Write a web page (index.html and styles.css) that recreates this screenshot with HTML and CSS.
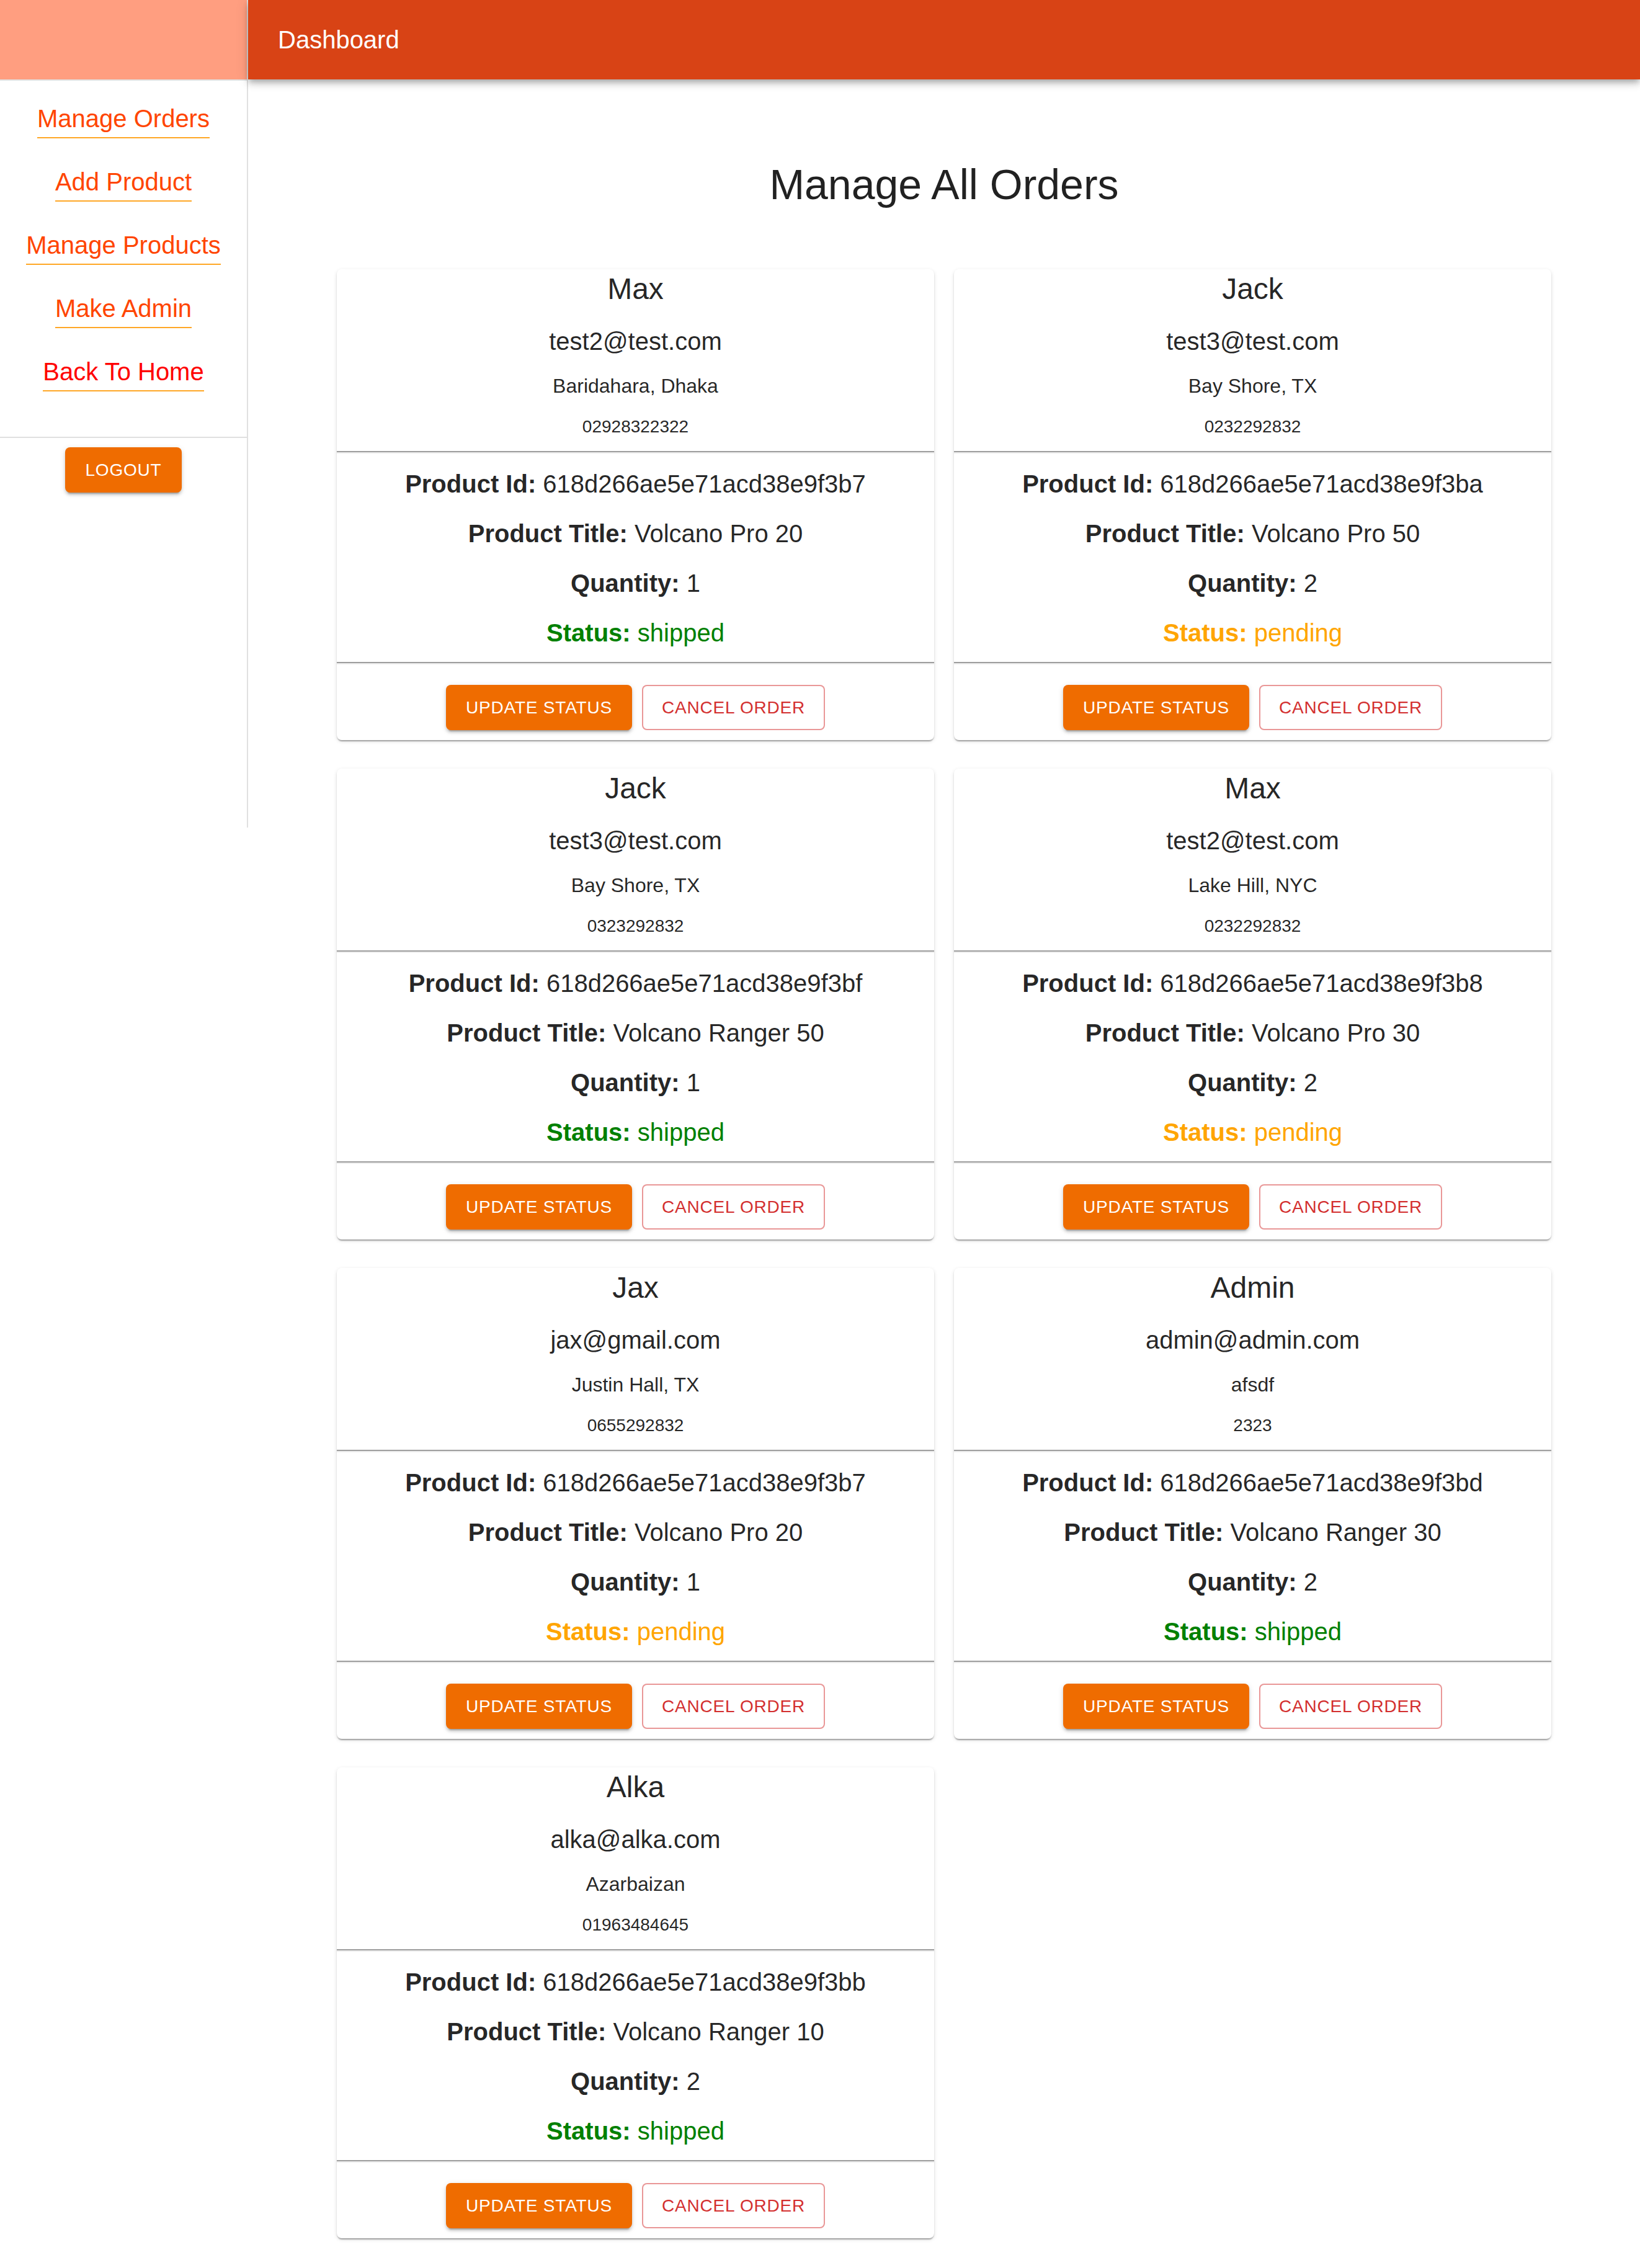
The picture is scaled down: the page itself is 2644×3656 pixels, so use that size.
FILE: index.html
```html
<!DOCTYPE html>
<html lang="en">
<head>
<meta charset="utf-8">
<title>Dashboard - Manage All Orders</title>
<link rel="stylesheet" href="styles.css">
</head>
<body>
<div class="app">
  <aside class="drawer">
    <div class="drawer-head"></div>
    <hr class="divider">
    <nav class="nav">
      <a class="nav-link" href="#">Manage Orders</a>
      <a class="nav-link" href="#">Add Product</a>
      <a class="nav-link" href="#">Manage Products</a>
      <a class="nav-link" href="#">Make Admin</a>
      <a class="nav-link nav-link-home" href="#">Back To Home</a>
    </nav>
    <hr class="divider divider-foot">
    <div class="drawer-foot">
      <button class="btn btn-contained">Logout</button>
    </div>
  </aside>

  <div class="main">
    <header class="appbar">
      <h6 class="appbar-title">Dashboard</h6>
    </header>

    <main class="content">
      <h4 class="page-title">Manage All Orders</h4>

      <div class="orders">
        <div class="card">
          <h5 class="customer-name">Max</h5>
          <p class="customer-email">test2@test.com</p>
          <p class="customer-address">Baridahara, Dhaka</p>
          <p class="customer-phone">02928322322</p>
          <hr class="card-rule">
          <div class="order-details">
            <p class="detail"><b>Product Id:</b> 618d266ae5e71acd38e9f3b7</p>
            <p class="detail"><b>Product Title:</b> Volcano Pro 20</p>
            <p class="detail"><b>Quantity:</b> 1</p>
            <p class="detail status-shipped"><b>Status:</b> shipped</p>
          </div>
          <hr class="card-rule card-rule-bottom">
          <div class="card-actions">
            <button class="btn btn-contained">Update Status</button>
            <button class="btn btn-outlined">Cancel Order</button>
          </div>
        </div>

        <div class="card">
          <h5 class="customer-name">Jack</h5>
          <p class="customer-email">test3@test.com</p>
          <p class="customer-address">Bay Shore, TX</p>
          <p class="customer-phone">0232292832</p>
          <hr class="card-rule">
          <div class="order-details">
            <p class="detail"><b>Product Id:</b> 618d266ae5e71acd38e9f3ba</p>
            <p class="detail"><b>Product Title:</b> Volcano Pro 50</p>
            <p class="detail"><b>Quantity:</b> 2</p>
            <p class="detail status-pending"><b>Status:</b> pending</p>
          </div>
          <hr class="card-rule card-rule-bottom">
          <div class="card-actions">
            <button class="btn btn-contained">Update Status</button>
            <button class="btn btn-outlined">Cancel Order</button>
          </div>
        </div>

        <div class="card">
          <h5 class="customer-name">Jack</h5>
          <p class="customer-email">test3@test.com</p>
          <p class="customer-address">Bay Shore, TX</p>
          <p class="customer-phone">0323292832</p>
          <hr class="card-rule">
          <div class="order-details">
            <p class="detail"><b>Product Id:</b> 618d266ae5e71acd38e9f3bf</p>
            <p class="detail"><b>Product Title:</b> Volcano Ranger 50</p>
            <p class="detail"><b>Quantity:</b> 1</p>
            <p class="detail status-shipped"><b>Status:</b> shipped</p>
          </div>
          <hr class="card-rule card-rule-bottom">
          <div class="card-actions">
            <button class="btn btn-contained">Update Status</button>
            <button class="btn btn-outlined">Cancel Order</button>
          </div>
        </div>

        <div class="card">
          <h5 class="customer-name">Max</h5>
          <p class="customer-email">test2@test.com</p>
          <p class="customer-address">Lake Hill, NYC</p>
          <p class="customer-phone">0232292832</p>
          <hr class="card-rule">
          <div class="order-details">
            <p class="detail"><b>Product Id:</b> 618d266ae5e71acd38e9f3b8</p>
            <p class="detail"><b>Product Title:</b> Volcano Pro 30</p>
            <p class="detail"><b>Quantity:</b> 2</p>
            <p class="detail status-pending"><b>Status:</b> pending</p>
          </div>
          <hr class="card-rule card-rule-bottom">
          <div class="card-actions">
            <button class="btn btn-contained">Update Status</button>
            <button class="btn btn-outlined">Cancel Order</button>
          </div>
        </div>

        <div class="card">
          <h5 class="customer-name">Jax</h5>
          <p class="customer-email">jax@gmail.com</p>
          <p class="customer-address">Justin Hall, TX</p>
          <p class="customer-phone">0655292832</p>
          <hr class="card-rule">
          <div class="order-details">
            <p class="detail"><b>Product Id:</b> 618d266ae5e71acd38e9f3b7</p>
            <p class="detail"><b>Product Title:</b> Volcano Pro 20</p>
            <p class="detail"><b>Quantity:</b> 1</p>
            <p class="detail status-pending"><b>Status:</b> pending</p>
          </div>
          <hr class="card-rule card-rule-bottom">
          <div class="card-actions">
            <button class="btn btn-contained">Update Status</button>
            <button class="btn btn-outlined">Cancel Order</button>
          </div>
        </div>

        <div class="card">
          <h5 class="customer-name">Admin</h5>
          <p class="customer-email">admin@admin.com</p>
          <p class="customer-address">afsdf</p>
          <p class="customer-phone">2323</p>
          <hr class="card-rule">
          <div class="order-details">
            <p class="detail"><b>Product Id:</b> 618d266ae5e71acd38e9f3bd</p>
            <p class="detail"><b>Product Title:</b> Volcano Ranger 30</p>
            <p class="detail"><b>Quantity:</b> 2</p>
            <p class="detail status-shipped"><b>Status:</b> shipped</p>
          </div>
          <hr class="card-rule card-rule-bottom">
          <div class="card-actions">
            <button class="btn btn-contained">Update Status</button>
            <button class="btn btn-outlined">Cancel Order</button>
          </div>
        </div>

        <div class="card">
          <h5 class="customer-name">Alka</h5>
          <p class="customer-email">alka@alka.com</p>
          <p class="customer-address">Azarbaizan</p>
          <p class="customer-phone">01963484645</p>
          <hr class="card-rule">
          <div class="order-details">
            <p class="detail"><b>Product Id:</b> 618d266ae5e71acd38e9f3bb</p>
            <p class="detail"><b>Product Title:</b> Volcano Ranger 10</p>
            <p class="detail"><b>Quantity:</b> 2</p>
            <p class="detail status-shipped"><b>Status:</b> shipped</p>
          </div>
          <hr class="card-rule card-rule-bottom">
          <div class="card-actions">
            <button class="btn btn-contained">Update Status</button>
            <button class="btn btn-outlined">Cancel Order</button>
          </div>
        </div>
      </div>
    </main>
  </div>
</div>
</body>
</html>
```

FILE: styles.css
```css
* {
  box-sizing: border-box;
}

html,
body {
  margin: 0;
  background: #ffffff;
}

body {
  font-family: "Liberation Sans", Arial, Helvetica, sans-serif;
  color: rgba(0, 0, 0, 0.87);
}

.app {
  display: flex;
  align-items: flex-start;
}

/* ---------- Drawer ---------- */
.drawer {
  flex: none;
  width: 400px;
  height: 1334px;
  border-right: 2px solid #e0e0e0;
  display: flex;
  flex-direction: column;
}

.drawer-head {
  height: 128px;
  background: #ff9e80;
}

.divider {
  margin: 0;
  height: 2px;
  border: 0;
  background: #e0e0e0;
}

.nav {
  display: flex;
  flex-direction: column;
  align-items: center;
  gap: 40px;
  padding-top: 31px;
}

.nav-link {
  display: inline-block;
  font-size: 40px;
  line-height: 60px;
  color: #ff4500;
  text-decoration: none;
  border-bottom: 2px solid #ffa726;
}

.nav-link-home {
  color: #ff0000;
}

.divider-foot {
  margin-top: 73px;
}

.drawer-foot {
  display: flex;
  justify-content: center;
  padding-top: 15px;
}

/* ---------- Buttons ---------- */
.btn {
  font-family: inherit;
  font-size: 28px;
  font-weight: 500;
  line-height: 49px;
  letter-spacing: 0.8px;
  text-transform: uppercase;
  border-radius: 8px;
  padding: 12px 32px;
  border: 0;
  cursor: pointer;
  white-space: nowrap;
}

.btn-contained {
  background: #ef6c00;
  color: #ffffff;
  box-shadow: 0 6px 2px -4px rgba(0, 0, 0, 0.2),
              0 4px 4px 0 rgba(0, 0, 0, 0.14),
              0 2px 10px 0 rgba(0, 0, 0, 0.12);
}

.btn-outlined {
  background: #ffffff;
  color: #d32f2f;
  border: 2px solid rgba(211, 47, 47, 0.5);
  padding: 10px 30px;
}

/* ---------- Main ---------- */
.main {
  flex: 1;
  min-width: 0;
}

.appbar {
  position: relative;
  z-index: 1;
  height: 128px;
  display: flex;
  align-items: center;
  padding: 0 48px;
  background: #d84315;
  color: #ffffff;
  box-shadow: 0 4px 8px -2px rgba(0, 0, 0, 0.2),
              0 8px 10px 0 rgba(0, 0, 0, 0.14),
              0 2px 20px 0 rgba(0, 0, 0, 0.12);
}

.appbar-title {
  margin: 0;
  font-size: 40px;
  font-weight: 500;
  line-height: 64px;
}

.content {
  padding-bottom: 40px;
}

.page-title {
  margin: 127px 0 0;
  text-align: center;
  font-size: 68px;
  font-weight: 400;
  line-height: 84px;
}

.orders {
  display: grid;
  grid-template-columns: 963px 963px;
  justify-content: center;
  column-gap: 32px;
  row-gap: 46px;
  margin-top: 95px;
}

/* ---------- Card ---------- */
.card {
  background: #ffffff;
  border-radius: 8px;
  overflow: hidden;
  text-align: center;
  box-shadow: 0 4px 2px -2px rgba(0, 0, 0, 0.2),
              0 2px 2px 0 rgba(0, 0, 0, 0.14),
              0 2px 6px 0 rgba(0, 0, 0, 0.12);
}

.customer-name {
  margin: 0;
  font-size: 48px;
  font-weight: 400;
  line-height: 64px;
}

.customer-email {
  margin: 20px 0 0;
  font-size: 40px;
  line-height: 64px;
}

.customer-address {
  margin: 16px 0 0;
  font-size: 32px;
  line-height: 48px;
}

.customer-phone {
  margin: 22px 0 0;
  font-size: 28px;
  line-height: 40px;
}

.card-rule {
  margin: 19px 0 0;
  height: 0;
  border: 0;
  border-top: 2px solid #9e9e9e;
  border-bottom: 2px solid #ededed;
}

.order-details {
  display: flex;
  flex-direction: column;
  gap: 16px;
  padding-top: 17px;
}

.detail {
  margin: 0;
  font-size: 40px;
  line-height: 64px;
}

.detail b {
  font-weight: 700;
}

.status-shipped {
  color: #008000;
}

.status-pending {
  color: #ffa500;
}

.card-rule-bottom {
  margin-top: 15px;
}

.card-actions {
  display: flex;
  justify-content: center;
  gap: 16px;
  padding: 33px 16px 16px;
}
```
